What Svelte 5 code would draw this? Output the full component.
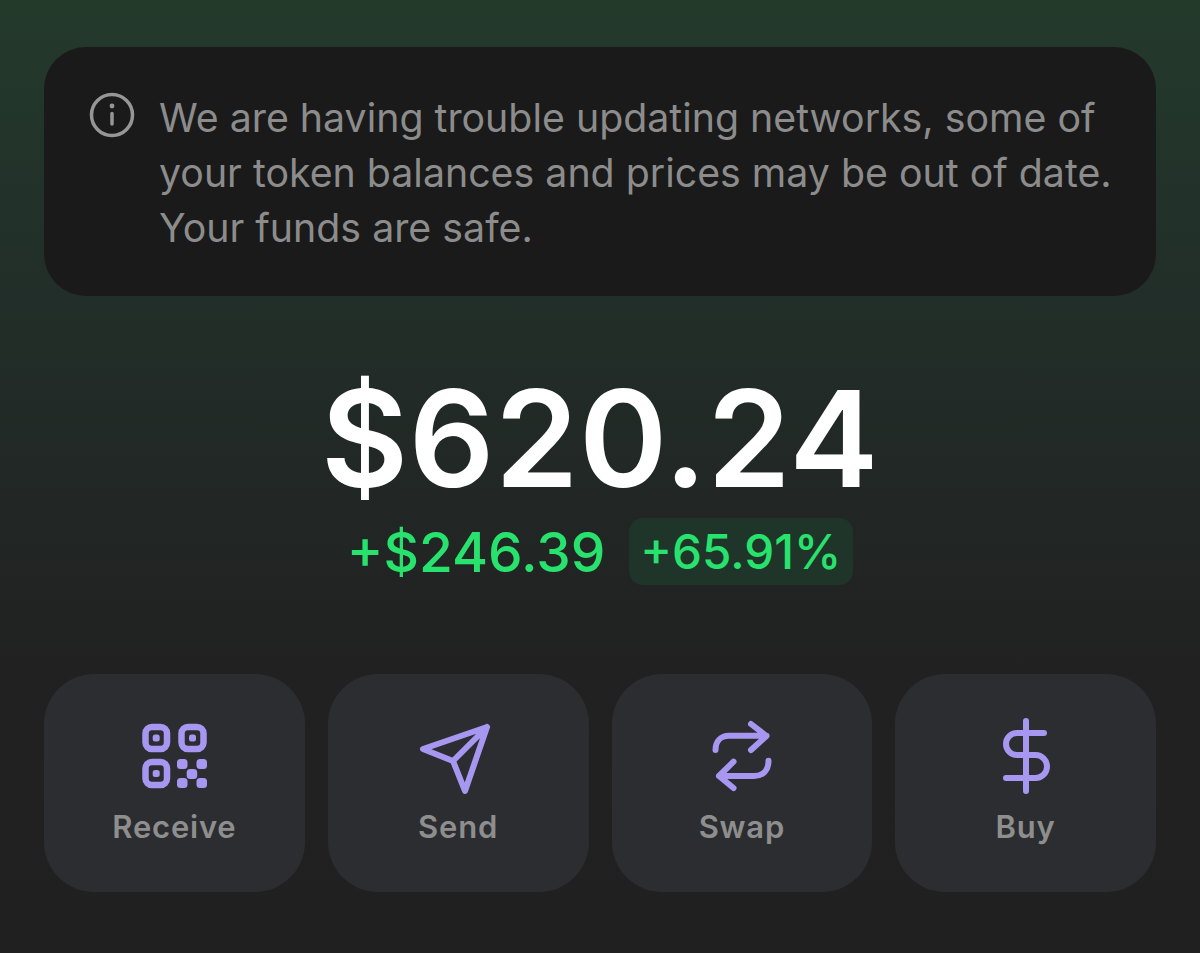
<script>
	const actions = ['Receive', 'Send', 'Swap', 'Buy'];
</script>

<main class="wallet">
	<section class="notice">
		<svg class="info" viewBox="0 0 46 46" width="46" height="46" aria-hidden="true">
			<circle cx="23" cy="23" r="20.5" />
			<line x1="23" y1="21.5" x2="23" y2="32" />
			<circle class="dot" cx="23" cy="14" r="2.4" />
		</svg>
		<p>We are having trouble updating networks, some of your token balances and prices may be out of date. Your funds are safe.</p>
	</section>

	<section class="balance">
		<h1>$620.24</h1>
		<div class="change">
			<span class="abs">+$246.39</span>
			<span class="pct">+65.91%</span>
		</div>
	</section>

	<nav class="actions">
		{#each actions as action}
			<button>
				<svg class="icon" viewBox="0 0 80 80" width="80" height="80" aria-hidden="true">
					{#if action === 'Receive'}
						<rect class="qr" x="11.5" y="11" width="21.5" height="22" rx="6.5" />
						<rect class="qr" x="47.5" y="11" width="22" height="22" rx="6.5" />
						<rect class="qr" x="11.5" y="46" width="21.5" height="23" rx="6.5" />
						<g class="fill">
							<rect x="18.7" y="18.5" width="7" height="7" rx="2.5" />
							<rect x="55" y="18.5" width="7" height="7" rx="2.5" />
							<rect x="18.7" y="54" width="7" height="7" rx="2.5" />
							<rect x="43" y="43" width="10.5" height="10" rx="3.5" />
							<rect x="62.5" y="43" width="10.5" height="10" rx="3.5" />
							<rect x="52.7" y="53" width="10.5" height="10" rx="3.5" />
							<rect x="43" y="62" width="10.5" height="10" rx="3.5" />
							<rect x="62.5" y="62" width="10.5" height="10" rx="3.5" />
						</g>
					{:else if action === 'Send'}
						<path d="M69 11 L5 33 L35 45 L47 75 Z M69 11 L35 45" />
					{:else if action === 'Swap'}
						<path d="M13.5 34 C13.5 25 19 19.7 27 19.7 H64.5 M49 8 L64.5 20 L49 34" />
						<path d="M66.5 44.7 C66.5 54 61 60 52 60 H17 M31.5 45.7 L17 60 L31.5 72" />
					{:else}
						<path d="M40 5 V75 M58 17 H31 A11 11 0 0 0 31 39 H49.5 A11.5 11.5 0 0 1 49.5 62 H20" />
					{/if}
				</svg>
				<span>{action}</span>
			</button>
		{/each}
	</nav>
</main>

<style>
	:global(body) {
		margin: 0;
		background: #202020;
	}

	.wallet {
		box-sizing: border-box;
		width: 1200px;
		height: 953px;
		padding: 47px 44px 0;
		overflow: hidden;
		font-family: Inter, "Liberation Sans", sans-serif;
		background: linear-gradient(180deg, #233a2b 0%, #22302a 25%, #212121 70%, #202020 100%);
	}

	.notice {
		box-sizing: border-box;
		height: 249px;
		display: flex;
		align-items: flex-start;
		gap: 24px;
		padding: 43px 40px 0 45px;
		background: #1a1a1a;
		border-radius: 42px;
	}

	.info {
		flex: none;
		margin-top: 2px;
		fill: none;
		stroke: #969696;
		stroke-width: 3.5;
		stroke-linecap: round;
	}

	.info .dot {
		fill: #969696;
		stroke: none;
	}

	.notice p {
		margin: 0;
		font-size: 39.3px;
		line-height: 55px;
		color: #8c8c8c;
	}

	.balance {
		display: flex;
		flex-direction: column;
		align-items: center;
		margin-top: 67px;
	}

	h1 {
		margin: 0;
		font-size: 134px;
		line-height: 150px;
		font-weight: 600;
		color: #fff;
		letter-spacing: 0.5px;
	}

	.change {
		display: flex;
		align-items: center;
		gap: 24px;
		margin-top: 5px;
		color: #28e26e;
		font-size: 55px;
		font-weight: 500;
	}

	.pct {
		padding: 0 12px 0 11px;
		height: 67px;
		line-height: 67px;
		font-size: 47.6px;
		font-weight: 500;
		background: #20352a;
		border-radius: 14px;
	}

	.actions {
		display: grid;
		grid-template-columns: repeat(4, 1fr);
		gap: 23px;
		margin-top: 89px;
	}

	button {
		height: 218px;
		display: flex;
		flex-direction: column;
		align-items: center;
		padding: 42px 0 0;
		border: 0;
		background: #2c2d31;
		border-radius: 50px;
		font: inherit;
	}

	.icon {
		fill: none;
		stroke: #a797f0;
		stroke-width: 6;
		stroke-linecap: round;
		stroke-linejoin: round;
	}

	.icon .fill {
		fill: #a797f0;
		stroke: none;
	}

	.icon .qr {
		stroke-width: 6.5;
	}

	button span {
		margin-top: 11px;
		font-size: 31px;
		line-height: 40px;
		font-weight: 600;
		letter-spacing: 0.8px;
		color: #8e8e8e;
	}
</style>
